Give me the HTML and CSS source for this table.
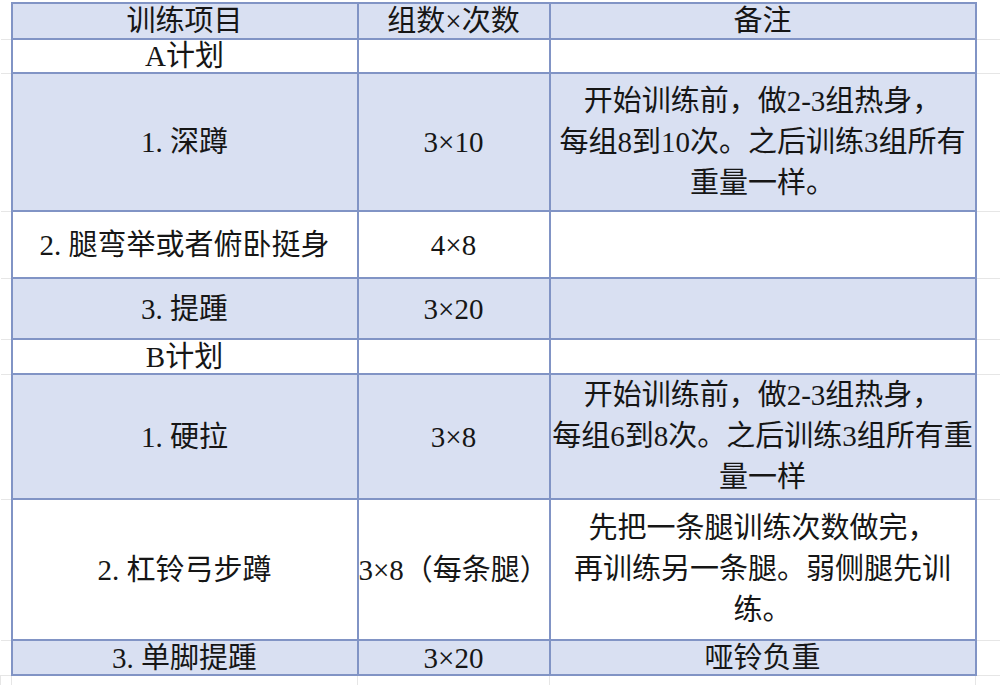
FILE: index.html
```html
<!DOCTYPE html>
<html lang="zh-CN">
<head>
<meta charset="utf-8">
<title>训练计划</title>
<link rel="stylesheet" href="styles.css">
</head>
<body>
<table class="sheet">
  <colgroup>
    <col class="c-gut-l">
    <col class="c-item">
    <col class="c-sets">
    <col class="c-note">
    <col class="c-gut-r">
  </colgroup>
  <tbody>
    <tr class="r-head blue">
      <td class="gut"></td>
      <td class="cell">训练项目</td>
      <td class="cell">组数×次数</td>
      <td class="cell">备注</td>
      <td class="gut"></td>
    </tr>
    <tr class="r-plan">
      <td class="gut"></td>
      <td class="cell">A计划</td>
      <td class="cell"></td>
      <td class="cell"></td>
      <td class="gut"></td>
    </tr>
    <tr class="r-a1 blue">
      <td class="gut"></td>
      <td class="cell">1. 深蹲</td>
      <td class="cell">3×10</td>
      <td class="cell multi">开始训练前，做2-3组热身，<br>每组8到10次。之后训练3组所有<br>重量一样。</td>
      <td class="gut"></td>
    </tr>
    <tr class="r-a2">
      <td class="gut"></td>
      <td class="cell">2. 腿弯举或者俯卧挺身</td>
      <td class="cell">4×8</td>
      <td class="cell"></td>
      <td class="gut"></td>
    </tr>
    <tr class="r-a3 blue">
      <td class="gut"></td>
      <td class="cell">3. 提踵</td>
      <td class="cell">3×20</td>
      <td class="cell"></td>
      <td class="gut"></td>
    </tr>
    <tr class="r-plan2">
      <td class="gut"></td>
      <td class="cell">B计划</td>
      <td class="cell"></td>
      <td class="cell"></td>
      <td class="gut"></td>
    </tr>
    <tr class="r-b1 blue">
      <td class="gut"></td>
      <td class="cell">1. 硬拉</td>
      <td class="cell">3×8</td>
      <td class="cell multi">开始训练前，做2-3组热身，<br>每组6到8次。之后训练3组所有重<br>量一样</td>
      <td class="gut"></td>
    </tr>
    <tr class="r-b2">
      <td class="gut"></td>
      <td class="cell">2. 杠铃弓步蹲</td>
      <td class="cell sets-wide">3×8（每条腿）</td>
      <td class="cell multi">先把一条腿训练次数做完，<br>再训练另一条腿。弱侧腿先训<br>练。</td>
      <td class="gut"></td>
    </tr>
    <tr class="r-b3 blue">
      <td class="gut"></td>
      <td class="cell">3. 单脚提踵</td>
      <td class="cell">3×20</td>
      <td class="cell">哑铃负重</td>
      <td class="gut"></td>
    </tr>
    <tr class="r-tail">
      <td class="tail"></td>
      <td class="tail"></td>
      <td class="tail"></td>
      <td class="tail"></td>
      <td class="tail"></td>
    </tr>
  </tbody>
</table>
</body>
</html>
```

FILE: styles.css
```css
html, body {
  margin: 0;
  padding: 0;
  background: #ffffff;
}

body {
  width: 1000px;
  height: 685px;
  overflow: hidden;
  padding-top: 2px;
  font-family: "Liberation Serif", "Noto Sans CJK SC", serif;
  color: #161616;
}

.sheet {
  width: 1000px;
  table-layout: fixed;
  border-collapse: collapse;
  border-spacing: 0;
}

.c-gut-l { width: 11px; }
.c-item { width: 346px; }
.c-sets { width: 192px; }
.c-note { width: 426px; }
.c-gut-r { width: 25px; }

.cell {
  border: 2px solid #8194c5;
  padding: 0;
  text-align: center;
  vertical-align: middle;
  font-size: 29px;
  line-height: 30px;
  white-space: nowrap;
  overflow: visible;
}

.blue .cell {
  background: #d9e0f2;
}

.cell.multi {
  line-height: 41px;
}

.sets-wide {
  text-align: left;
  padding-left: 0;
}

.gut {
  padding: 0;
  border-top: none;
  border-left: none;
  border-right: none;
  border-bottom: 1px solid #e6e6e6;
}

.tail {
  padding: 0;
  border-top: none;
  border-bottom: none;
  border-left: 1px solid #e6e6e6;
  border-right: 1px solid #e6e6e6;
}

.r-head { height: 36px; }
.r-plan { height: 34px; }
.r-a1 { height: 138px; }
.r-a2 { height: 67px; }
.r-a3 { height: 61px; }
.r-plan2 { height: 35px; }
.r-b1 { height: 125px; }
.r-b2 { height: 141px; }
.r-b3 { height: 35px; }
.r-tail { height: 20px; }
```
